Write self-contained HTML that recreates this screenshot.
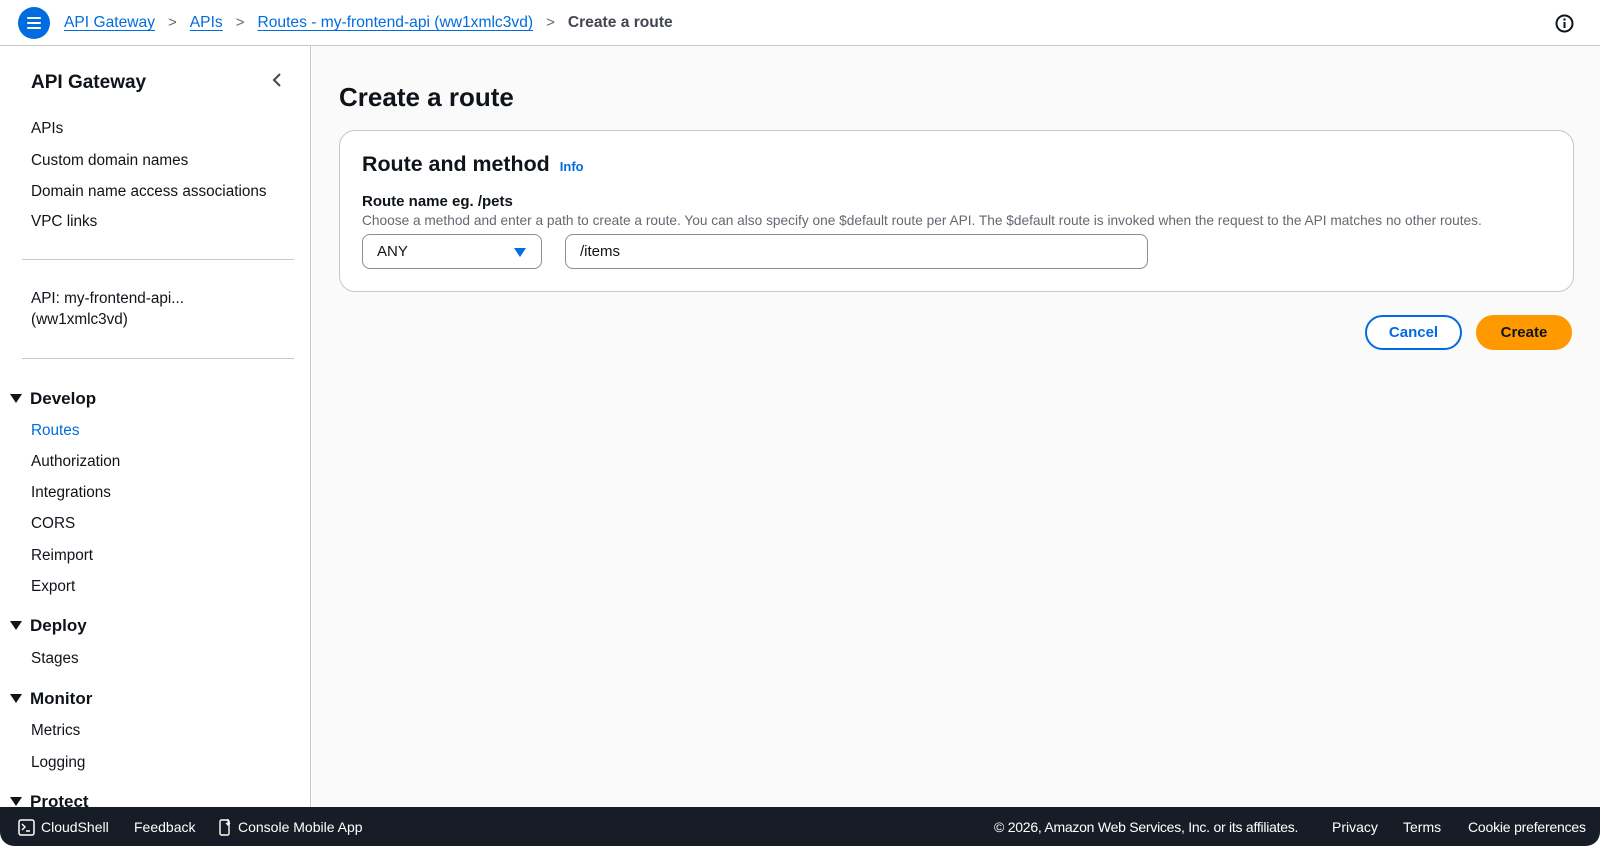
<!DOCTYPE html>
<html><head><meta charset="utf-8"><style>
*{box-sizing:border-box;margin:0;padding:0}
body{width:1600px;height:846px;overflow:hidden;background:#fff;font-family:"Liberation Sans",sans-serif;color:#0f141a;position:relative}
.top{position:absolute;left:0;top:0;width:1600px;height:46px;border-bottom:1px solid #c6c6cd;background:#fff}
.menu{position:absolute;left:18px;top:7px;width:32px;height:32px;border-radius:50%;background:#006ce0}
.menu i{position:absolute;left:9px;width:14px;height:2px;background:#fff;border-radius:1px}
.bc{position:absolute;left:64px;top:14px;font-size:15.6px;display:flex;gap:0}
.bc a{color:#006ce0;text-decoration:underline;text-underline-offset:3px}
.bc .sep{color:#656871;margin:0 13px;font-size:15px}
.bc .cur{color:#424650;font-weight:bold}
.side{position:absolute;left:0;top:46px;width:311px;height:761px;border-right:1px solid #c6c6cd;background:#fff;overflow:hidden}
.side .h{position:absolute;left:31px;top:26px;font-size:19px;font-weight:bold}
.side .it{position:absolute;left:31px;font-size:15.3px;color:#0f141a}
.side .sec{position:absolute;left:10px;font-size:17px;font-weight:bold}
.side .sec:before{content:"";display:inline-block;border-left:6px solid transparent;border-right:6px solid transparent;border-top:9px solid #0f141a;margin-right:8px;vertical-align:1px}
.side hr{position:absolute;left:22px;width:272px;border:0;border-top:1px solid #c6c6cd}
.main{position:absolute;left:312px;top:46px;width:1288px;height:761px;background:#fafafa}
h1{position:absolute;left:27px;top:36px;font-size:26px;font-weight:bold}
.card{position:absolute;left:27px;top:84px;width:1235px;height:162px;background:#fff;border:1px solid #c6c6cd;border-radius:16px}
.card h2{position:absolute;left:22px;top:21px;font-size:21.4px;font-weight:bold}
.card h2 span{font-size:13px;color:#006ce0;margin-left:10px}
.lab{position:absolute;left:22px;top:62px;font-size:15px;font-weight:bold}
.desc{position:absolute;left:22px;top:82px;font-size:13.7px;color:#656871}
.sel{position:absolute;left:22px;top:103px;width:180px;height:35px;border:1px solid #8c8c94;border-radius:8px;font-size:15px;padding:8px 14px}
.sel b{position:absolute;right:15px;top:13px;border-left:6px solid transparent;border-right:6px solid transparent;border-top:9px solid #006ce0}
.inp{position:absolute;left:225px;top:103px;width:583px;height:35px;border:1px solid #8c8c94;border-radius:8px;font-size:15px;padding:8px 14px}
.btn{position:absolute;top:269px;height:35px;border-radius:18px;font-size:15px;font-weight:bold;text-align:center;line-height:31px}
.cancel{left:1053px;width:97px;border:2px solid #006ce0;color:#006ce0;background:#fff}
.create{left:1164px;width:96px;background:#ff9900;color:#0f141a;border:2px solid #ff9900}
.foot{position:absolute;left:0;top:807px;width:1600px;height:39px;background:#161d26;color:#fff;font-size:14px;border-radius:0 0 14px 14px}
.foot span{position:absolute;top:12px}
</style></head><body>
<div class="top">
<div class="menu"><i style="top:10px"></i><i style="top:15px"></i><i style="top:20px"></i></div>
<div class="bc"><a>API Gateway</a><span class="sep">&gt;</span><a>APIs</a><span class="sep">&gt;</span><a>Routes - my-frontend-api (ww1xmlc3vd)</a><span class="sep">&gt;</span><span class="cur">Create a route</span></div>
<svg style="position:absolute;left:1555px;top:14px" width="19" height="19" viewBox="0 0 19 19"><circle cx="9.5" cy="9.5" r="8" fill="none" stroke="#0f141a" stroke-width="2"/><path d="M9.5 8v6" stroke="#0f141a" stroke-width="2"/><circle cx="9.5" cy="5.5" r="1.2" fill="#0f141a"/></svg>
</div>
<div class="side">
<div class="h">API Gateway</div>
<svg style="position:absolute;left:271px;top:26px" width="12" height="16"><path d="M9 2L3 8l6 6" fill="none" stroke="#424650" stroke-width="2"/></svg>
<div class="it" style="top:74px">APIs</div>
<div class="it" style="top:106px">Custom domain names</div>
<div class="it" style="top:137px">Domain name access associations</div>
<div class="it" style="top:167px">VPC links</div>
<hr style="top:213px">
<div class="it" style="top:242px;line-height:21px">API: my-frontend-api...<br>(ww1xmlc3vd)</div>
<hr style="top:312px">
<div class="sec" style="top:343px">Develop</div>
<div class="it" style="top:376px;color:#006ce0">Routes</div>
<div class="it" style="top:407px">Authorization</div>
<div class="it" style="top:438px">Integrations</div>
<div class="it" style="top:469px">CORS</div>
<div class="it" style="top:501px">Reimport</div>
<div class="it" style="top:532px">Export</div>
<div class="sec" style="top:570px">Deploy</div>
<div class="it" style="top:604px">Stages</div>
<div class="sec" style="top:643px">Monitor</div>
<div class="it" style="top:676px">Metrics</div>
<div class="it" style="top:708px">Logging</div>
<div class="sec" style="top:746px">Protect</div>
</div>
<div class="main">
<h1>Create a route</h1>
<div class="card">
<h2>Route and method<span>Info</span></h2>
<div class="lab">Route name eg. /pets</div>
<div class="desc">Choose a method and enter a path to create a route. You can also specify one $default route per API. The $default route is invoked when the request to the API matches no other routes.</div>
<div class="sel">ANY<b></b></div>
<div class="inp">/items</div>
</div>
<div class="btn cancel">Cancel</div>
<div class="btn create">Create</div>
</div>
<div class="foot">
<svg style="position:absolute;left:18px;top:12px" width="17" height="17"><rect x="1" y="1" width="15" height="15" rx="2" fill="none" stroke="#fff" stroke-width="1.5"/><path d="M4 5l3 3-3 3M8 12h4" stroke="#fff" stroke-width="1.4" fill="none"/></svg>
<span style="left:41px">CloudShell</span>
<span style="left:134px">Feedback</span>
<svg style="position:absolute;left:219px;top:11px" width="13" height="18"><rect x="1" y="2" width="9" height="15" rx="1.5" fill="none" stroke="#fff" stroke-width="1.4"/><path d="M9 1v6M7 5l2 2 2-2" stroke="#fff" stroke-width="1.2" fill="none"/></svg>
<span style="left:238px">Console Mobile App</span>
<span style="left:994px;letter-spacing:-0.25px">© 2026, Amazon Web Services, Inc. or its affiliates.</span>
<span style="left:1332px">Privacy</span>
<span style="left:1403px">Terms</span>
<span style="left:1468px;letter-spacing:-0.2px">Cookie preferences</span>
</div>
</body></html>
